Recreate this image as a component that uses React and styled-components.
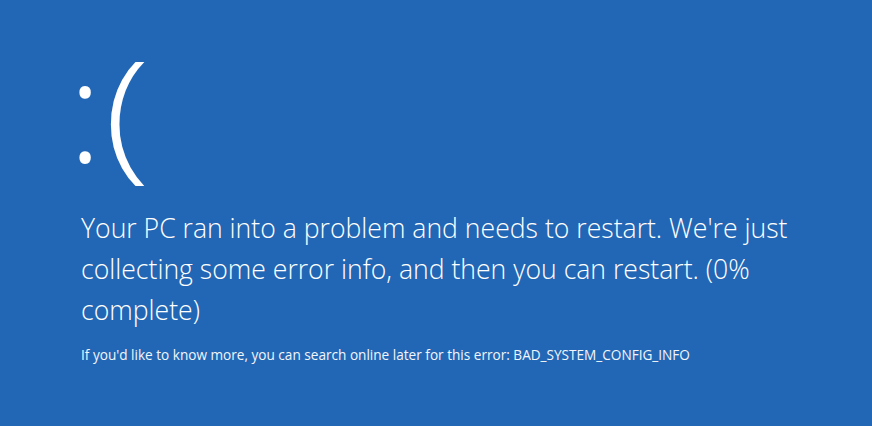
import styled, { createGlobalStyle } from "styled-components";

const Global = createGlobalStyle`
  html, body {
    margin: 0;
    padding: 0;
    background: #2267b5;
  }
  #root {
    min-height: 100vh;
  }
`;

const Screen = styled.main`
  box-sizing: border-box;
  width: 100%;
  min-height: 100vh;
  background: #2267b5;
  color: #ffffff;
  font-family: "Open Sans", "Noto Sans", sans-serif;
  padding: 36px 0 0 76px;
`;

const Face = styled.div`
  margin-left: -8px;
  font-size: 143px;
  font-weight: 350;
  line-height: 1;
  height: 160px;
  white-space: nowrap;
`;

const Eyes = styled.span`
  display: inline-block;
`;

const Mouth = styled.span`
  display: inline-block;
  margin-left: 2px;
  font-weight: 330;
  transform: scaleX(1.18);
  transform-origin: left center;
`;

const Message = styled.p`
  margin: 12px 0 0 5px;
  max-width: 740px;
  font-size: 26.6px;
  font-weight: 300;
  line-height: 41px;
`;

const Detail = styled.p`
  margin: 14px 0 0 5px;
  font-size: 13.6px;
  font-weight: 400;
  color: #f2f5fa;
`;

export default function App() {
  return (
    <>
      <Global />
      <Screen>
        <Face>
          <Eyes>:</Eyes>
          <Mouth>(</Mouth>
        </Face>
        <Message>
          Your PC ran into a problem and needs to restart. We're just
          collecting some error info, and then you can restart. (0%
          complete)
        </Message>
        <Detail>
          If you'd like to know more, you can search online later for this
          error: BAD_SYSTEM_CONFIG_INFO
        </Detail>
      </Screen>
    </>
  );
}
